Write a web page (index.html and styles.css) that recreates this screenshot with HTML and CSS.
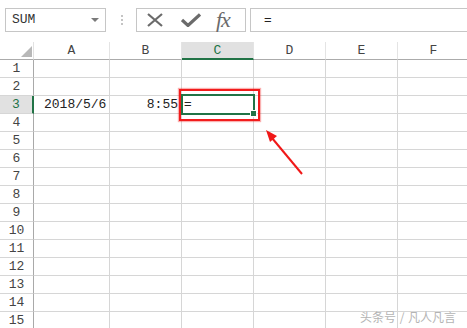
FILE: index.html
```html
<!DOCTYPE html>
<html lang="zh-CN">
<head>
    <meta charset="UTF-8">
    <title>SUM</title>
    <link rel="stylesheet" href="styles.css">
</head>
<body>
    <div class="formula-bar">
        <div class="name-box">
            <span>SUM</span>
            <span class="drop"></span>
        </div>
        <div class="grip"><i></i><i></i><i></i></div>
        <div class="tools">
            <svg class="icon" width="18" height="14" viewBox="0 0 18 14">
                <path d="M2 1 L16 13 M16 1 L2 13" stroke="#6b6b6b" stroke-width="2.2" fill="none"/>
            </svg>
            <svg class="icon" width="20" height="14" viewBox="0 0 20 14">
                <path d="M1 7 L7 12.5 L19 1.5" stroke="#6b6b6b" stroke-width="3.2" fill="none"/>
            </svg>
            <span class="fx">fx</span>
        </div>
        <div class="input">=</div>
    </div>

    <div class="sheet">
        <div class="row head">
            <div class="rh corner"><span class="tri"></span></div>
            <div class="ch a">A</div>
            <div class="ch">B</div>
            <div class="ch sel">C</div>
            <div class="ch">D</div>
            <div class="ch">E</div>
            <div class="ch">F</div>
        </div>
        <div class="row"><div class="rh">1</div><div class="c a"></div><div class="c"></div><div class="c"></div><div class="c"></div><div class="c"></div><div class="c"></div></div>
        <div class="row"><div class="rh">2</div><div class="c a"></div><div class="c"></div><div class="c"></div><div class="c"></div><div class="c"></div><div class="c"></div></div>
        <div class="row"><div class="rh sel">3</div><div class="c a">2018/5/6</div><div class="c num">8:55</div><div class="c"></div><div class="c"></div><div class="c"></div><div class="c"></div></div>
        <div class="row"><div class="rh">4</div><div class="c a"></div><div class="c"></div><div class="c"></div><div class="c"></div><div class="c"></div><div class="c"></div></div>
        <div class="row"><div class="rh">5</div><div class="c a"></div><div class="c"></div><div class="c"></div><div class="c"></div><div class="c"></div><div class="c"></div></div>
        <div class="row"><div class="rh">6</div><div class="c a"></div><div class="c"></div><div class="c"></div><div class="c"></div><div class="c"></div><div class="c"></div></div>
        <div class="row"><div class="rh">7</div><div class="c a"></div><div class="c"></div><div class="c"></div><div class="c"></div><div class="c"></div><div class="c"></div></div>
        <div class="row"><div class="rh">8</div><div class="c a"></div><div class="c"></div><div class="c"></div><div class="c"></div><div class="c"></div><div class="c"></div></div>
        <div class="row"><div class="rh">9</div><div class="c a"></div><div class="c"></div><div class="c"></div><div class="c"></div><div class="c"></div><div class="c"></div></div>
        <div class="row"><div class="rh">10</div><div class="c a"></div><div class="c"></div><div class="c"></div><div class="c"></div><div class="c"></div><div class="c"></div></div>
        <div class="row"><div class="rh">11</div><div class="c a"></div><div class="c"></div><div class="c"></div><div class="c"></div><div class="c"></div><div class="c"></div></div>
        <div class="row"><div class="rh">12</div><div class="c a"></div><div class="c"></div><div class="c"></div><div class="c"></div><div class="c"></div><div class="c"></div></div>
        <div class="row"><div class="rh">13</div><div class="c a"></div><div class="c"></div><div class="c"></div><div class="c"></div><div class="c"></div><div class="c"></div></div>
        <div class="row"><div class="rh">14</div><div class="c a"></div><div class="c"></div><div class="c"></div><div class="c"></div><div class="c"></div><div class="c"></div></div>
        <div class="row"><div class="rh">15</div><div class="c a"></div><div class="c"></div><div class="c"></div><div class="c"></div><div class="c"></div><div class="c"></div></div>

        <!-- active cell C3 -->
        <div class="active">=<span class="handle"></span></div>
        <!-- annotation -->
        <div class="mark"></div>
        <svg class="arrow" width="50" height="56" viewBox="0 0 50 56">
            <path d="M42 48 L12 12" stroke="#f01818" stroke-width="2" fill="none"/>
            <path d="M6 4 L17 10 L10 16 Z" fill="#f01818"/>
        </svg>
        <div class="watermark">头条号 / 凡人凡言</div>
    </div>
</body>
</html>
```

FILE: styles.css
```css
body {
    margin: 0;
    width: 467px;
    height: 328px;
    overflow: hidden;
    background: #fff;
    font-family: "Liberation Mono", "DejaVu Sans Mono", monospace;
    font-size: 13px;
    color: #222;
}

.formula-bar {
    display: flex;
    align-items: center;
    height: 42px;
    padding-left: 5px;
    box-sizing: border-box;
    padding-bottom: 3px;
}

.name-box {
    width: 101px;
    height: 24px;
    box-sizing: border-box;
    border: 1px solid #c6c6c6;
    display: flex;
    align-items: center;
    justify-content: space-between;
    padding: 0 6px 0 6px;
    color: #333;
}

.drop {
    width: 0;
    height: 0;
    border-left: 4px solid transparent;
    border-right: 4px solid transparent;
    border-top: 4px solid #7a7a7a;
}

.grip {
    display: flex;
    flex-direction: column;
    gap: 2px;
    margin: 0 13px 0 15px;
}

.grip i {
    width: 2px;
    height: 2px;
    background: #c4c4c4;
}

.tools {
    width: 110px;
    height: 24px;
    box-sizing: border-box;
    border: 1px solid #c6c6c6;
    display: flex;
    align-items: center;
    gap: 0;
    padding-left: 9px;
}

.tools .icon {
    margin-right: 17px;
}

.tools .icon + .icon {
    margin-right: 15px;
}

.fx {
    font-family: "Liberation Serif", serif;
    font-style: italic;
    font-size: 22px;
    line-height: 20px;
    color: #6b6b6b;
    letter-spacing: -1px;
}

.input {
    flex: 1;
    height: 24px;
    box-sizing: border-box;
    border: 1px solid #c6c6c6;
    border-right: none;
    margin-left: 4px;
    padding-left: 13px;
    line-height: 22px;
    font-family: "Liberation Sans", sans-serif;
}

.sheet {
    position: relative;
}

.row {
    display: flex;
    height: 18px;
}

.rh, .ch, .c {
    box-sizing: border-box;
    height: 18px;
    border-bottom: 1px solid #d6d6d6;
    border-right: 1px solid #d6d6d6;
    line-height: 17px;
    flex: none;
}

.rh {
    width: 34px;
    text-align: center;
    color: #444;
    border-right-color: #a9a9a9;
    border-bottom-color: #d6d6d6;
}

.rh.sel {
    background: #e1e1e1;
    color: #217346;
    border-right: 2px solid #217346;
    width: 34px;
}

.corner {
    position: relative;
    border-right-color: #e2e2e2;
    border-bottom-color: #ababab;
}

.tri {
    position: absolute;
    right: 1px;
    bottom: 2px;
    width: 0;
    height: 0;
    border-left: 11px solid transparent;
    border-bottom: 11px solid #b8b8b8;
}

.ch {
    width: 72px;
    text-align: center;
    color: #444;
    border-right-color: #e4e4e4;
    border-bottom-color: #ababab;
}

.ch.a, .c.a {
    width: 76px;
}

.ch.sel {
    background: #e1e1e1;
    color: #217346;
    border-bottom: 2px solid #217346;
}

.c {
    width: 72px;
    padding: 0 3px 0 10px;
    white-space: nowrap;
}

.c.num {
    text-align: right;
    padding-right: 3px;
}

.active {
    position: absolute;
    left: 181px;
    top: 52px;
    width: 74px;
    height: 21px;
    box-sizing: border-box;
    border: 2px solid #217346;
    line-height: 16px;
    padding-left: 1px;
    font-family: "Liberation Sans", sans-serif;
}

.handle {
    position: absolute;
    right: -4px;
    bottom: -4px;
    width: 5px;
    height: 5px;
    background: #217346;
    border: 1px solid #fff;
}

.mark {
    position: absolute;
    left: 179px;
    top: 47px;
    width: 81px;
    height: 32px;
    box-sizing: border-box;
    border: 2px solid #f21c1c;
    box-shadow: 0 0 1px 1px rgba(242, 28, 28, 0.35);
}

.arrow {
    position: absolute;
    left: 260px;
    top: 84px;
}

.watermark {
    position: absolute;
    left: 360px;
    top: 266px;
    font-family: "Noto Sans CJK SC", sans-serif;
    font-size: 12px;
    color: #b4b4b4;
    word-spacing: 1px;
    text-shadow: 0 0 1px #fff;
}
```
